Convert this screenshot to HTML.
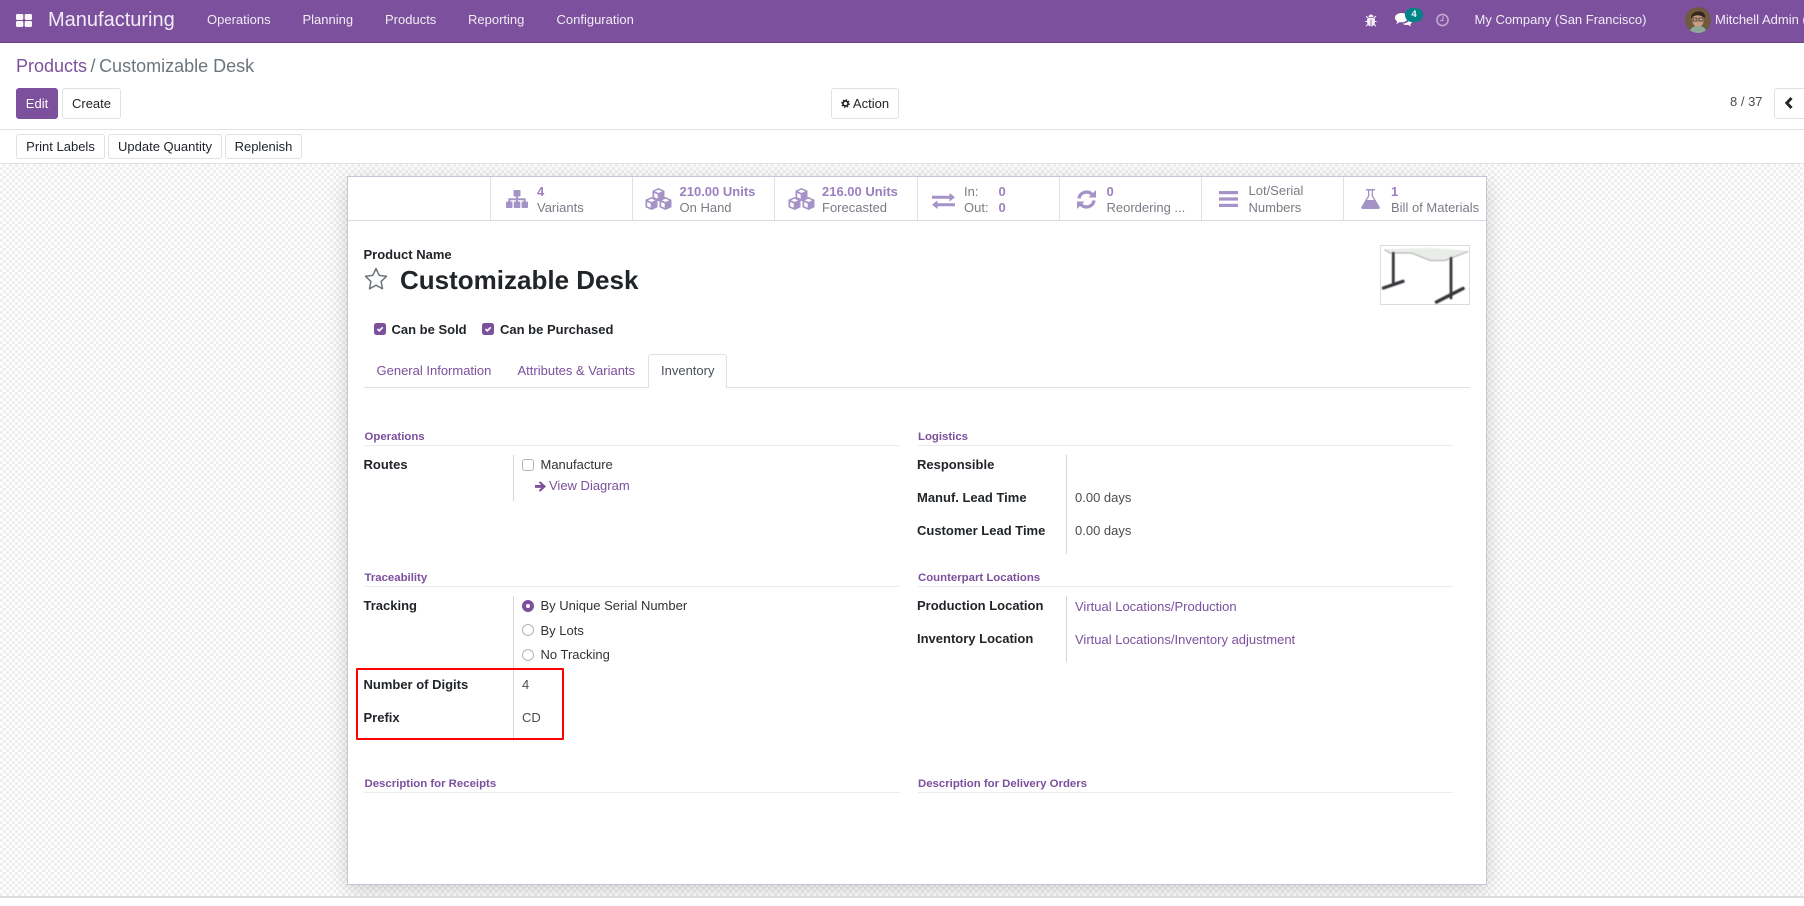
<!DOCTYPE html>
<html><head><meta charset="utf-8"><title>Customizable Desk</title>
<style>
html,body{margin:0;padding:0;width:1804px;height:906px;overflow:hidden;background:#fff}
body{position:relative;font-family:"Liberation Sans",sans-serif;font-size:13px;color:#212529}
.t{position:absolute;white-space:nowrap;line-height:16px}
.b{font-weight:700}
.n{color:#f1ecf5}
.l{color:#7c509d}
.v{color:#4c4c4c}
.s{color:#7b7b86}
.m{color:#9c7fbe;font-weight:700}
.h{color:#7c509d;font-weight:700;font-size:11.4px}
.btn{position:absolute;box-sizing:border-box;border:1px solid #dee2e6;border-radius:3px;background:#fff;text-align:center;color:#212529}
.r{position:absolute;background:#dee2e6}
svg{position:absolute;overflow:visible}
</style></head><body>

<div style="position:absolute;left:0;top:0;width:1804px;height:43px;background:#7c509d;border-bottom:1px solid #6a4288;box-sizing:border-box"></div>
<svg style="left:16px;top:14px" width="16" height="13" viewBox="0 0 16 13"><g fill="#f8f5fa"><rect width="7.3" height="6" rx="1.200"/><rect x="8.7" width="7.3" height="6" rx="1.200"/><rect y="7" width="7.3" height="6" rx="1.200"/><rect x="8.7" y="7" width="7.3" height="6" rx="1.200"/></g></svg>
<div class="t n" style="left:48px;top:8px;font-size:20px;line-height:24px">Manufacturing</div>
<div class="t n" style="left:207px;top:12px">Operations</div>
<div class="t n" style="left:302.500px;top:12px">Planning</div>
<div class="t n" style="left:385px;top:12px">Products</div>
<div class="t n" style="left:468px;top:12px">Reporting</div>
<div class="t n" style="left:556.500px;top:12px">Configuration</div>

<svg style="left:1365px;top:14px" width="12" height="13" viewBox="0 0 12 13"><path fill="#f6f1f9" d="M3.500 3a2.500 2.500 0 0 1 5 0zM3 3.800h6c.8.8 1 2 1 3.400 0 3-1.600 5-3.600 5.200V5.500h-.8v6.900C3.600 12.200 2 10.200 2 7.200 2 5.800 2.200 4.600 3 3.800z"/><path stroke="#f6f1f9" stroke-width="1" fill="none" d="M1 2 3 4M11 2 9 4M.4 7.500H2M11.600 7.500H10M1 12.300l2-2.300M11 12.300l-2-2.300"/></svg>
<svg style="left:1395px;top:13px" width="17" height="14" viewBox="0 0 17 14"><path fill="#fff" d="M6.500 0C3 0 0 2 0 4.700c0 1.500.9 2.800 2.300 3.700-.2.900-.7 1.600-1.300 2.200 1.400-.1 2.600-.7 3.500-1.500.6.100 1.300.2 2 .2 3.600 0 6.500-2.100 6.500-4.600S10.100 0 6.500 0z"/><path fill="#fff" d="M14.500 5.500c0 3-3 5-7 5.300C8.500 11.500 9.800 12 11.500 12c.5 0 1-.1 1.500-.2.800.8 1.900 1.200 3.200 1.300-.5-.5-.9-1.100-1-1.800 1.100-.7 1.800-1.700 1.800-2.900 0-1-.9-2-2.500-2.900z"/></svg>
<div style="position:absolute;left:1405px;top:8px;width:18px;height:14px;border-radius:7px;background:#00848a;color:#f3fbfb;font-size:9.500px;font-weight:700;text-align:center;line-height:14px">4</div>
<svg style="left:1436px;top:13px" width="13" height="14" viewBox="0 0 14 14"><circle cx="7" cy="7" r="6" fill="none" stroke="#c0a9d2" stroke-width="1.700"/><path fill="none" stroke="#c0a9d2" stroke-width="1.300" d="M7.500 3v4.500H4.500"/></svg>
<div class="t n" style="left:1474.500px;top:12px">My Company (San Francisco)</div>
<svg style="left:1684.500px;top:7px" width="26" height="26" viewBox="0 0 26 26"><clipPath id="c"><circle cx="13" cy="13" r="13"/></clipPath><g clip-path="url(#c)"><rect width="26" height="26" fill="#6f5a3e"/><path fill="#c89d80" d="M7 11c0-5 12-5 12 0 0 6-2.500 9-6 9s-6-3-6-9z"/><path fill="#33261f" d="M6 11C5 3 21 2 20 10l-1 1c-2-3-10-4-12 0z"/><rect x="8" y="11" width="4" height="3" fill="none" stroke="#2a2a2a" stroke-width=".7"/><rect x="14" y="11" width="4" height="3" fill="none" stroke="#2a2a2a" stroke-width=".7"/><path fill="#8fa89a" d="M4 26c1-5 4-7 9-7s8 2 9 7z"/></g></svg>
<div class="t n" style="left:1715px;top:12px">Mitchell Admin (</div>

<div class="t" style="left:16px;top:55px;font-size:18px;line-height:22px"><span class="l">Products</span><span style="color:#6c757d;margin:0 3.500px 0 3.500px">/</span><span style="color:#6c757d">Customizable Desk</span></div>

<div class="btn" style="left:16px;top:88px;width:42px;height:31px;line-height:29px;background:#7c509d;border-color:#7c509d;color:#fff">Edit</div>
<div class="btn" style="left:62px;top:88px;width:59px;height:31px;line-height:29px">Create</div>
<div class="btn" style="left:831px;top:88px;width:68px;height:31px;line-height:29px;padding-left:12px">Action</div>
<svg style="left:841px;top:99px" width="9" height="9" viewBox="0 0 10 10"><circle cx="5" cy="5" r="2.800" fill="none" stroke="#212529" stroke-width="1.900"/><circle cx="5" cy="5" r="4.200" fill="none" stroke="#212529" stroke-width="1.300" stroke-dasharray="1.600 1.700"/></svg>
<div class="t" style="left:1730px;top:94px;color:#4c4c4c">8 / 37</div>
<div class="btn" style="left:1774px;top:88px;width:40px;height:31px"></div>
<svg style="left:1785px;top:97px" width="8" height="12" viewBox="0 0 8 12"><path d="M6.500 1 1.800 6l4.700 5" fill="none" stroke="#212529" stroke-width="2.900"/></svg>

<div class="r" style="left:0;top:129px;width:1804px;height:1px"></div>
<div class="btn" style="left:16px;top:134px;width:89px;height:25px;line-height:23px">Print Labels</div>
<div class="btn" style="left:108px;top:134px;width:114px;height:25px;line-height:23px">Update Quantity</div>
<div class="btn" style="left:225px;top:134px;width:77px;height:25px;line-height:23px">Replenish</div>

<div style="position:absolute;left:0;top:163px;width:1804px;height:735px;overflow:hidden;box-sizing:border-box;border-top:1px solid #dee2e6;border-bottom:2px solid #ddd;background:repeating-conic-gradient(#eeeeee 0 25%,#fff 0 50%) 0 0/6px 6px">
<div style="position:absolute;left:347px;top:12px;width:1140px;height:709px;box-sizing:border-box;background:#fff;border:1px solid #c9c5d6;box-shadow:0 5px 20px rgba(0,0,0,.17)"></div>
</div>

<div class="r" style="left:348px;top:220px;width:1138px;height:1px;background:#dcdbe3"></div>
<div class="r" style="left:490px;top:177px;width:1px;height:43px"></div>
<div class="r" style="left:632px;top:177px;width:1px;height:43px"></div>
<div class="r" style="left:774px;top:177px;width:1px;height:43px"></div>
<div class="r" style="left:917px;top:177px;width:1px;height:43px"></div>
<div class="r" style="left:1059px;top:177px;width:1px;height:43px"></div>
<div class="r" style="left:1201px;top:177px;width:1px;height:43px"></div>
<div class="r" style="left:1343px;top:177px;width:1px;height:43px"></div>

<svg style="left:506px;top:190px" width="22" height="18" viewBox="0 0 22 18"><g fill="#a592c6"><rect x="7.500" width="7" height="6.500" rx="1"/><rect x="0" y="11.500" width="6.500" height="6.500" rx="1"/><rect x="7.800" y="11.500" width="6.500" height="6.500" rx="1"/><rect x="15.500" y="11.500" width="6.500" height="6.500" rx="1"/><path d="M10 6h2v2.300h7.600V12h-2V10.300h-5.600V12h-2v-1.700H4.400V12h-2V8.300H10z"/></g></svg>
<div class="t m" style="left:537px;top:184px">4</div>
<div class="t s" style="left:537px;top:200px">Variants</div>

<svg style="left:645px;top:188px" width="27" height="22" viewBox="0 0 27 22"><g fill="#a592c6"><path d="M13.500 0l6 2.800v7.400l-6 3-6-3V2.800z"/><path d="M6.500 9l6 2.800v7.400l-6 2.800-6-2.800v-7.400z"/><path d="M20.500 9l6 2.800v7.400l-6 2.800-6-2.800v-7.400z"/></g><g fill="#fff"><path d="M13.500 1.800l3.700 1.500-3.700 1.700-3.700-1.700zM9.200 5l3.500 1.500v4.300L9.200 9.200zM6.500 10.800l3.700 1.500-3.700 1.700-3.700-1.700zM2.200 14l3.500 1.500v4.300l-3.500-1.600zM20.500 10.800l3.700 1.500-3.700 1.700-3.700-1.700zM16.200 14l3.500 1.500v4.300l-3.500-1.600z"/></g></svg>
<div class="t m" style="left:679.500px;top:184px">210.00 Units</div>
<div class="t s" style="left:679.500px;top:200px">On Hand</div>

<svg style="left:787.500px;top:188px" width="27" height="22" viewBox="0 0 27 22"><g fill="#a592c6"><path d="M13.500 0l6 2.800v7.400l-6 3-6-3V2.800z"/><path d="M6.500 9l6 2.800v7.400l-6 2.800-6-2.800v-7.400z"/><path d="M20.500 9l6 2.800v7.400l-6 2.800-6-2.800v-7.400z"/></g><g fill="#fff"><path d="M13.500 1.800l3.700 1.500-3.700 1.700-3.700-1.700zM9.200 5l3.500 1.500v4.300L9.200 9.200zM6.500 10.800l3.700 1.500-3.700 1.700-3.700-1.700zM2.200 14l3.500 1.500v4.300l-3.500-1.600zM20.500 10.800l3.700 1.500-3.700 1.700-3.700-1.700zM16.200 14l3.500 1.500v4.300l-3.500-1.600z"/></g></svg>
<div class="t m" style="left:822px;top:184px">216.00 Units</div>
<div class="t s" style="left:822px;top:200px">Forecasted</div>

<svg style="left:932px;top:192.500px" width="23" height="16" viewBox="0 0 23 16"><path fill="#a592c6" d="M0 2.800h17.500V0L23 4.300l-5.500 4.300V5.800H0zM23 10.200H5.500V7.400L0 11.700 5.500 16v-2.800H23z"/></svg>
<div class="t s" style="left:964px;top:184px">In:</div>
<div class="t m" style="left:998.500px;top:184px">0</div>
<div class="t s" style="left:964px;top:200px">Out:</div>
<div class="t m" style="left:998.500px;top:200px">0</div>

<svg style="left:1076.500px;top:190px" width="19" height="19" viewBox="0 0 19 19"><g fill="none" stroke="#a592c6" stroke-width="3.300"><path d="M1.900 8.500A7.800 7.800 0 0 1 15 4.300"/><path d="M17.100 10.500A7.800 7.800 0 0 1 4 14.700"/></g><path fill="#a592c6" d="M19 0v7.500h-7.500zM0 19v-7.500h7.500z"/></svg>
<div class="t m" style="left:1106.500px;top:184px">0</div>
<div class="t s" style="left:1106.500px;top:200px">Reordering ...</div>

<svg style="left:1219px;top:191px" width="19" height="16" viewBox="0 0 19 16"><g fill="#a592c6"><rect width="19" height="3.200"/><rect y="6.400" width="19" height="3.200"/><rect y="12.800" width="19" height="3.200"/></g></svg>
<div class="t s" style="left:1248.500px;top:183px">Lot/Serial</div>
<div class="t s" style="left:1248.500px;top:200px">Numbers</div>

<svg style="left:1361px;top:189px" width="19" height="20" viewBox="0 0 19 20"><path fill="#a592c6" d="M5 0h9v1.500h-2v5.300l6.500 11c.6 1 0 2.200-1.200 2.200H1.700C.5 20-.1 18.800.5 17.800L7 6.800V1.500H5zM8.300 1.500v5.700L6 11h7l-2.300-3.800V1.500z"/></svg>
<div class="t m" style="left:1391px;top:184px">1</div>
<div class="t s" style="left:1391px;top:200px">Bill of Materials</div>

<div class="t b" style="left:363.500px;top:247px">Product Name</div>
<svg style="left:363.500px;top:267px" width="24" height="23" viewBox="0 0 24 23"><path d="M12 1.500l3.200 6.900 7.300.9-5.400 5.100 1.400 7.400L12 18.200l-6.500 3.600 1.400-7.400-5.400-5.100 7.300-.9z" fill="none" stroke="#6c757d" stroke-width="1.500" stroke-linejoin="round"/></svg>
<div class="t b" style="left:400px;top:264px;font-size:26px;line-height:32px">Customizable Desk</div>

<div style="position:absolute;left:1380px;top:245px;width:88px;height:58px;border:1px solid #dcdbe3;background:#fff"></div>
<svg style="left:1381px;top:246px" width="88" height="58" viewBox="0 0 88 58"><defs><filter id="bl" x="-5%" y="-5%" width="110%" height="110%"><feGaussianBlur stdDeviation=".5"/></filter></defs><g filter="url(#bl)"><path d="M3.300 3.300 50 2 87 4.500 64 14H49L40.700 10.700 30.700 6.700H9z" fill="#e9ece9"/><path d="M3.500 3.500 9 7H30.700L40.700 11 49 14.500H64L87 5.500" fill="none" stroke="#a5a8a5" stroke-width="1"/><g stroke="#38383c" fill="none" stroke-linecap="round"><path d="M12.300 7V37" stroke-width="2.800"/><path d="M2.500 42 22 35.300" stroke-width="3.300"/><path d="M70 12V52" stroke-width="2.800"/><path d="M55.500 56 82 42.500" stroke-width="3.500"/></g></g></svg>

<svg style="left:374px;top:323px" width="12" height="12" viewBox="0 0 12 12"><rect width="12" height="12" rx="2.500" fill="#7c509d"/><path d="M3.500 6l1.800 1.800L8.700 4.300" fill="none" stroke="#fff" stroke-width="1.600"/></svg>
<div class="t b" style="left:391.500px;top:321.500px">Can be Sold</div>
<svg style="left:482px;top:323px" width="12" height="12" viewBox="0 0 12 12"><rect width="12" height="12" rx="2.500" fill="#7c509d"/><path d="M3.500 6l1.800 1.800L8.700 4.300" fill="none" stroke="#fff" stroke-width="1.600"/></svg>
<div class="t b" style="left:500px;top:321.500px">Can be Purchased</div>

<div class="r" style="left:363.500px;top:387px;width:1106.500px;height:1px"></div>
<div style="position:absolute;left:648px;top:354px;width:79px;height:34px;box-sizing:border-box;border:1px solid #dee2e6;border-bottom:0;border-radius:3px 3px 0 0;background:#fff"></div>
<div class="t l" style="left:376.500px;top:362.500px">General Information</div>
<div class="t l" style="left:517.500px;top:362.500px">Attributes &amp; Variants</div>
<div class="t" style="left:661px;top:362.500px;color:#495057">Inventory</div>

<div class="t h" style="left:364.500px;top:429px">Operations</div>
<div class="r" style="left:364px;top:445px;width:536px;height:1px;background:#ebebeb"></div>
<div class="t b" style="left:363.500px;top:456.500px">Routes</div>
<div class="r" style="left:513px;top:455px;width:1px;height:46px;background:#d6d6d6"></div>
<div style="position:absolute;left:522px;top:459px;width:12px;height:12px;box-sizing:border-box;border:1px solid #adb5bd;border-radius:3px;background:#fff"></div>
<div class="t v" style="left:540.500px;top:456.500px;color:#333">Manufacture</div>
<svg style="left:534.500px;top:480.500px" width="11.500" height="11" viewBox="0 0 12 11"><path fill="#7c509d" d="M0 4h6.500L4 1.500 5.500 0 11.500 5.500 5.500 11 4 9.500 6.500 7H0z"/></svg>
<div class="t l" style="left:549px;top:478px">View Diagram</div>

<div class="t h" style="left:364.500px;top:570px">Traceability</div>
<div class="r" style="left:364px;top:586px;width:536px;height:1px;background:#ebebeb"></div>
<div class="t b" style="left:363.500px;top:598px">Tracking</div>
<div class="r" style="left:513px;top:596px;width:1px;height:145px;background:#d6d6d6"></div>
<div style="position:absolute;left:522px;top:599.500px;width:12px;height:12px;box-sizing:border-box;border:4px solid #7c509d;border-radius:50%;background:#fff"></div>
<div class="t v" style="left:540.500px;top:597.500px;color:#333">By Unique Serial Number</div>
<div style="position:absolute;left:522px;top:624px;width:12px;height:12px;box-sizing:border-box;border:1px solid #adb5bd;border-radius:50%;background:#fff"></div>
<div class="t v" style="left:540.500px;top:622.500px;color:#333">By Lots</div>
<div style="position:absolute;left:522px;top:649px;width:12px;height:12px;box-sizing:border-box;border:1px solid #adb5bd;border-radius:50%;background:#fff"></div>
<div class="t v" style="left:540.500px;top:647px;color:#333">No Tracking</div>
<div class="t b" style="left:363.500px;top:676.500px">Number of Digits</div>
<div class="t v" style="left:522px;top:676.500px">4</div>
<div class="t b" style="left:363.500px;top:709.500px">Prefix</div>
<div class="t v" style="left:522px;top:709.500px">CD</div>
<div style="position:absolute;left:356px;top:668px;width:208px;height:72px;box-sizing:border-box;border:2px solid #f00;border-radius:1px"></div>

<div class="t h" style="left:364.500px;top:776px">Description for Receipts</div>
<div class="r" style="left:364px;top:792px;width:536px;height:1px;background:#ebebeb"></div>

<div class="t h" style="left:918px;top:429px">Logistics</div>
<div class="r" style="left:917.500px;top:445px;width:535.500px;height:1px;background:#ebebeb"></div>
<div class="t b" style="left:917px;top:456.500px">Responsible</div>
<div class="r" style="left:1066px;top:455px;width:1px;height:99px;background:#d6d6d6"></div>
<div class="t b" style="left:917px;top:489.500px">Manuf. Lead Time</div>
<div class="t v" style="left:1075px;top:489.500px">0.00 days</div>
<div class="t b" style="left:917px;top:522.500px">Customer Lead Time</div>
<div class="t v" style="left:1075px;top:522.500px">0.00 days</div>

<div class="t h" style="left:918px;top:570px">Counterpart Locations</div>
<div class="r" style="left:917.500px;top:586px;width:535.500px;height:1px;background:#ebebeb"></div>
<div class="t b" style="left:917px;top:597.500px">Production Location</div>
<div class="r" style="left:1066px;top:596px;width:1px;height:66px;background:#d6d6d6"></div>
<div class="t l" style="left:1075px;top:598.500px">Virtual Locations/Production</div>
<div class="t b" style="left:917px;top:630.500px">Inventory Location</div>
<div class="t l" style="left:1075px;top:631.500px">Virtual Locations/Inventory adjustment</div>

<div class="t h" style="left:918px;top:776px">Description for Delivery Orders</div>
<div class="r" style="left:917.500px;top:792px;width:535.500px;height:1px;background:#ebebeb"></div>
</body></html>
